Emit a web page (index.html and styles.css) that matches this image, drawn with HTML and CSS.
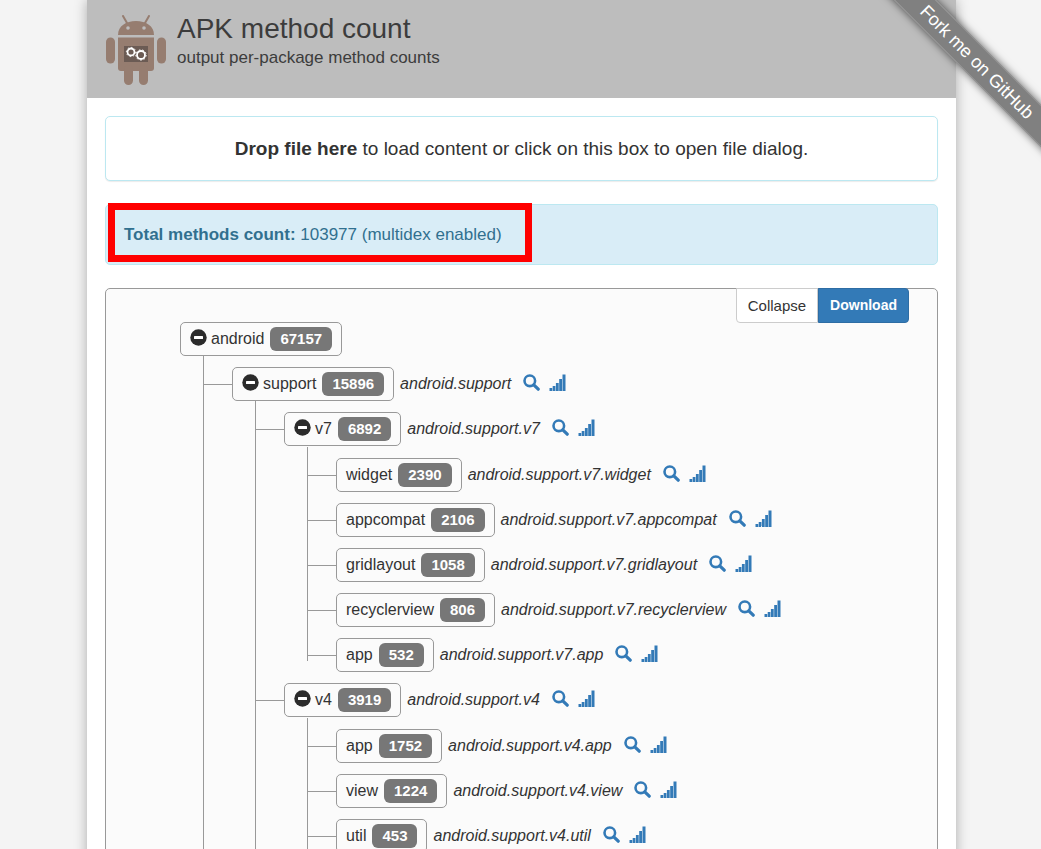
FILE: index.html
```
<!DOCTYPE html>
<html lang="en">
<head>
<meta charset="utf-8">
<title>APK method count</title>
<link rel="stylesheet" href="styles.css">
</head>
<body>
<svg class="sprite" aria-hidden="true">
  <symbol id="minus" viewBox="0 0 17 17"><circle cx="8.500" cy="8.500" r="8.200" fill="#2b2b2b"/><rect x="4" y="7" width="9" height="3" rx=".5" fill="#fff"/></symbol>
  <symbol id="search" viewBox="0 0 17 17"><circle cx="6.800" cy="6.800" r="5.300" fill="none" stroke="currentColor" stroke-width="2.600"/><path d="M10.800 10.800 15.200 15.200" stroke="currentColor" stroke-width="3.200" stroke-linecap="round"/></symbol>
  <symbol id="signal" viewBox="0 0 17 17"><path fill="currentColor" d="M.5 14h2.700v3H.5zM3.700 12h2.700v5H3.700zM6.900 9h2.800v8H6.900zM10.200 5h2.800v12h-2.800zM13.500.5h3V17h-3z"/></symbol>
</svg>
<div class="ribbon"><a href="#">Fork me on GitHub</a></div>
<div class="page">
  <header class="header">
    <svg class="logo" viewBox="0 0 60 70" aria-hidden="true">
      <g fill="#967d70">
        <path d="M12 20C12 11 20 6 30 6s18 5 18 14z"/>
        <path d="M17 1l4 7M43 1l-4 7" stroke="#967d70" stroke-width="2" stroke-linecap="round"/>
        <path d="M12 22.500h36V53a3 3 0 0 1-3 3H15a3 3 0 0 1-3-3z"/>
        <rect x="0" y="22.500" width="9" height="26" rx="4.500"/><rect x="51" y="22.500" width="9" height="26" rx="4.500"/>
        <rect x="18" y="50" width="9" height="20" rx="4.500"/><rect x="33" y="50" width="9" height="20" rx="4.500"/>
      </g>
      <circle cx="22" cy="13" r="1.800" fill="#bdbdbd"/><circle cx="38" cy="13" r="1.800" fill="#bdbdbd"/>
      <rect x="18" y="31" width="24" height="16" fill="#6b5b54"/>
      <circle cx="25" cy="37" r="3.500" fill="none" stroke="#fff" stroke-width="1.800"/><circle cx="35" cy="40" r="4" fill="none" stroke="#fff" stroke-width="1.800"/>
      <circle cx="25" cy="37" r="4.600" fill="none" stroke="#fff" stroke-dasharray="1.500 2"/><circle cx="35" cy="40" r="5.200" fill="none" stroke="#fff" stroke-dasharray="1.600 2"/>
    </svg>
    <div>
      <h1 class="title">APK method count</h1>
      <p class="subtitle">output per-package method counts</p>
    </div>
  </header>
  <main class="content">
    <button class="drop" type="button"><strong>Drop file here</strong> to load content or click on this box to open file dialog.</button>
    <div class="total"><strong>Total methods count:</strong> 103977 (multidex enabled)<span class="highlight"></span></div>
    <section class="panel">
      <div class="actions"><button class="btn" type="button">Collapse</button><button class="btn btn-primary" type="button">Download</button></div>
      <ul class="tree">
        <li><div class="row"><button class="node" type="button"><svg class="icon"><use href="#minus"/></svg><span>android</span><b class="badge">67157</b></button></div>
          <ul>
            <li><div class="row"><button class="node" type="button"><svg class="icon"><use href="#minus"/></svg><span>support</span><b class="badge">15896</b></button><i>android.support</i><a href="#" aria-label="Search"><svg class="icon"><use href="#search"/></svg></a><a href="#" aria-label="Chart"><svg class="icon"><use href="#signal"/></svg></a></div>
              <ul>
                <li><div class="row"><button class="node" type="button"><svg class="icon"><use href="#minus"/></svg><span>v7</span><b class="badge">6892</b></button><i>android.support.v7</i><a href="#" aria-label="Search"><svg class="icon"><use href="#search"/></svg></a><a href="#" aria-label="Chart"><svg class="icon"><use href="#signal"/></svg></a></div>
                  <ul class="leaves">
                    <li><div class="row"><button class="node" type="button"><span>widget</span><b class="badge">2390</b></button><i>android.support.v7.widget</i><a href="#" aria-label="Search"><svg class="icon"><use href="#search"/></svg></a><a href="#" aria-label="Chart"><svg class="icon"><use href="#signal"/></svg></a></div></li>
                    <li><div class="row"><button class="node" type="button"><span>appcompat</span><b class="badge">2106</b></button><i>android.support.v7.appcompat</i><a href="#" aria-label="Search"><svg class="icon"><use href="#search"/></svg></a><a href="#" aria-label="Chart"><svg class="icon"><use href="#signal"/></svg></a></div></li>
                    <li><div class="row"><button class="node" type="button"><span>gridlayout</span><b class="badge">1058</b></button><i>android.support.v7.gridlayout</i><a href="#" aria-label="Search"><svg class="icon"><use href="#search"/></svg></a><a href="#" aria-label="Chart"><svg class="icon"><use href="#signal"/></svg></a></div></li>
                    <li><div class="row"><button class="node" type="button"><span>recyclerview</span><b class="badge">806</b></button><i>android.support.v7.recyclerview</i><a href="#" aria-label="Search"><svg class="icon"><use href="#search"/></svg></a><a href="#" aria-label="Chart"><svg class="icon"><use href="#signal"/></svg></a></div></li>
                    <li class="last"><div class="row"><button class="node" type="button"><span>app</span><b class="badge">532</b></button><i>android.support.v7.app</i><a href="#" aria-label="Search"><svg class="icon"><use href="#search"/></svg></a><a href="#" aria-label="Chart"><svg class="icon"><use href="#signal"/></svg></a></div></li>
                  </ul>
                </li>
                <li><div class="row"><button class="node" type="button"><svg class="icon"><use href="#minus"/></svg><span>v4</span><b class="badge">3919</b></button><i>android.support.v4</i><a href="#" aria-label="Search"><svg class="icon"><use href="#search"/></svg></a><a href="#" aria-label="Chart"><svg class="icon"><use href="#signal"/></svg></a></div>
                  <ul class="leaves">
                    <li><div class="row"><button class="node" type="button"><span>app</span><b class="badge">1752</b></button><i>android.support.v4.app</i><a href="#" aria-label="Search"><svg class="icon"><use href="#search"/></svg></a><a href="#" aria-label="Chart"><svg class="icon"><use href="#signal"/></svg></a></div></li>
                    <li><div class="row"><button class="node" type="button"><span>view</span><b class="badge">1224</b></button><i>android.support.v4.view</i><a href="#" aria-label="Search"><svg class="icon"><use href="#search"/></svg></a><a href="#" aria-label="Chart"><svg class="icon"><use href="#signal"/></svg></a></div></li>
                    <li><div class="row"><button class="node" type="button"><span>util</span><b class="badge">453</b></button><i>android.support.v4.util</i><a href="#" aria-label="Search"><svg class="icon"><use href="#search"/></svg></a><a href="#" aria-label="Chart"><svg class="icon"><use href="#signal"/></svg></a></div></li>
                  </ul>
                </li>
              </ul>
            </li>
          </ul>
        </li>
      </ul>
    </section>
  </main>
</div>
</body>
</html>
```
FILE: styles.css
```
* { box-sizing: border-box; }
html { scrollbar-width: none; }
body {
  margin: 0;
  padding-left: 2px;
  background: #f4f4f4;
  color: #333;
  font: 16px/24px "Liberation Sans", Arial, sans-serif;
}
button { font: inherit; color: inherit; cursor: pointer; }
.sprite { position: absolute; width: 0; height: 0; }

.page {
  max-width: 869px;
  min-height: 100vh;
  margin: 0 auto;
  background: #fff;
  box-shadow: 0 0 12px rgba(0, 0, 0, .3);
}
.header {
  display: flex;
  gap: 11px;
  padding: 15px 19px 13px;
  background: #bdbdbd;
}
.logo { width: 60px; height: 70px; }
.title { margin: 0; font-size: 28px; font-weight: 400; line-height: 28px; color: #3c3c3c; }
.subtitle { margin: 3px 0 0; font-size: 17px; line-height: 24px; color: #3c3c3c; }

.content { display: grid; gap: 23px; padding: 18px; }
.drop {
  padding: 19px;
  border: 1px solid #bce8f1;
  border-radius: 5px;
  background: #fff;
  box-shadow: 0 1px 1px rgba(0, 0, 0, .08);
  font-size: 19px;
  line-height: 25px;
}
.total {
  position: relative;
  padding: 18px;
  border: 1px solid #bce8f1;
  border-radius: 5px;
  background: #d9edf7;
  color: #31708f;
  font-size: 17px;
  line-height: 23px;
}
.highlight {
  position: absolute;
  top: -2px;
  left: 2px;
  width: 424px;
  height: 59px;
  border: 7px solid #f00;
}

.panel {
  position: relative;
  padding: 33px 28px 33px 74px;
  border: 1px solid #999;
  border-radius: 5px;
  background: #fbfbfb;
}
.actions { position: absolute; top: -1px; right: 28px; display: flex; }
.btn {
  padding: 5px 11px;
  border: 1px solid #ccc;
  border-radius: 0 0 0 4px;
  background: #fff;
  font-size: 15px;
  line-height: 23px;
}
.btn-primary {
  border-color: #2e6da4;
  border-radius: 0 4px 4px 0;
  background: #337ab7;
  color: #fff;
  font-size: 14px;
  font-weight: 700;
}

.tree, .tree ul { margin: 0; padding: 0; list-style: none; }
.tree ul { margin-left: 23px; }
.tree .leaves { padding-top: 1px; }
.tree ul > li { position: relative; padding: 11px 0 0 29px; }
.tree ul > li::before {
  content: "";
  position: absolute;
  top: 0;
  bottom: 0;
  left: 0;
  border-left: 1px solid #999;
}
.tree ul > .last::before { bottom: auto; height: 34px; }
.tree ul > li::after {
  content: "";
  position: absolute;
  top: 28px;
  left: 0;
  width: 29px;
  border-top: 1px solid #999;
}
.row { display: flex; align-items: center; gap: 9px; }
.row i { margin: 0 3px 0 -3px; }
.row a { display: flex; color: #337ab7; }
.icon { width: 17px; height: 17px; margin-bottom: 3px; }
.node {
  display: flex;
  align-items: center;
  padding: 4px 9px;
  border: 1px solid #999;
  border-radius: 5px;
  background: #fbfbfb;
}
.node .icon { margin-right: 4px; }
.badge {
  margin-left: 6px;
  padding: 0 10px;
  border-radius: 6px;
  background: #777;
  color: #fff;
  font-size: 15px;
}

.ribbon {
  position: absolute;
  top: 0;
  right: 0;
  z-index: 2;
  width: 180px;
  height: 180px;
  overflow: hidden;
  pointer-events: none;
}
.ribbon a {
  position: absolute;
  top: 47px;
  right: -56px;
  width: 240px;
  border: 1px solid #999;
  background: #808080;
  box-shadow: 0 0 8px rgba(0, 0, 0, .6);
  color: #fff;
  font-size: 18px;
  line-height: 28px;
  text-align: center;
  text-decoration: none;
  transform: rotate(45deg);
  pointer-events: auto;
}
```
